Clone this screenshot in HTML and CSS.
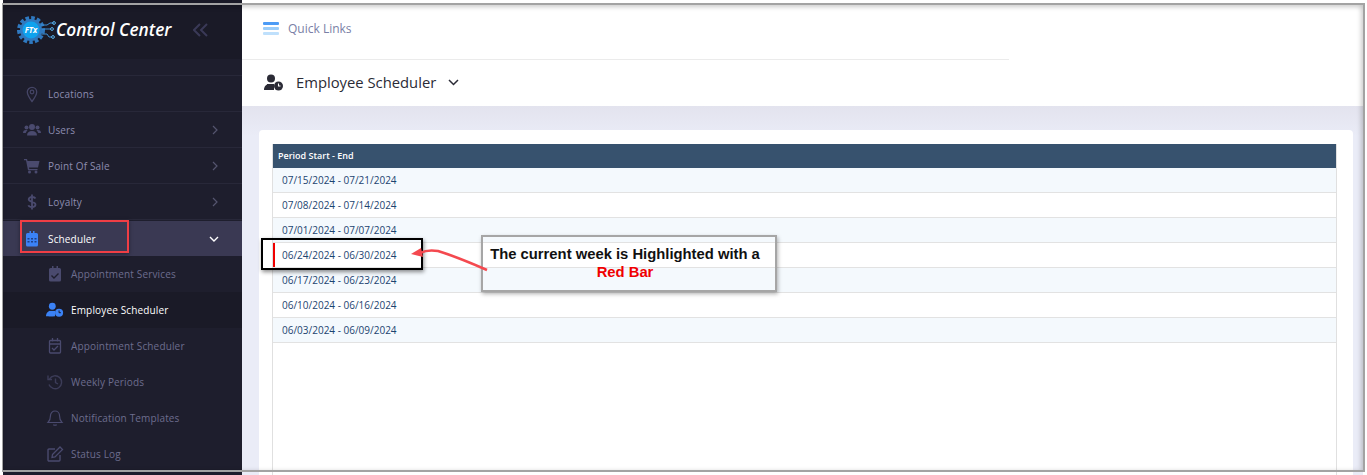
FILE: index.html
```html
<!DOCTYPE html>
<html lang="en">
  <head>
    <meta charset="UTF-8" />
    <meta name="viewport" content="width=device-width, initial-scale=1.0" />
    <title>Employee Scheduler</title>
    <link rel="stylesheet" href="styles.css">
  </head>
  <body>
    <div class="app">
      <aside class="sidebar">
        <div class="brand">
          <svg class="brand-logo" width="42" height="32" viewBox="0 0 42 32">
            <circle cx="16" cy="16" r="11.5" fill="none" stroke="#2f79c0" stroke-width="5" stroke-dasharray="3.4 2" />
            <circle cx="16" cy="16" r="11" fill="#2f79c0" />
            <circle cx="16" cy="16" r="8.5" fill="#0fa2ee" />
            <text x="16" y="19" class="brand-ftx" text-anchor="middle">FTx</text>
            <path d="M26 11h6l3-2h4M27 15h9M26 20h6l2 3h3" fill="none" stroke="#3d8fd6" stroke-width="1" />
            <circle cx="39" cy="9" r="1.4" fill="none" stroke="#59b0ea" />
            <circle cx="37" cy="15" r="1.4" fill="none" stroke="#59b0ea" />
            <circle cx="38" cy="23" r="1.4" fill="none" stroke="#59b0ea" />
          </svg>
          <span class="brand-name">Control Center</span>
          <svg class="brand-toggle" width="15" height="14" viewBox="0 0 15 14">
            <path d="M7 1L1 7l6 6M14 1L8 7l6 6" fill="none" stroke="#3a3957" stroke-width="2" />
          </svg>
        </div>
        <div class="sidebar-gap"></div>
        <nav class="menu">
          <a class="menu-item">
            <svg class="menu-icon" width="18" height="18" viewBox="0 0 18 18"><path d="M9 16.500C6 12.500 4.300 10 4.300 7a4.700 4.700 0 0 1 9.400 0c0 3-1.700 5.500-4.700 9.500z" fill="none" stroke="#454566" stroke-width="1.300" /><circle cx="9" cy="7" r="1.800" fill="none" stroke="#454566" stroke-width="1.200" /></svg>
            <span>Locations</span>
          </a>
          <a class="menu-item">
            <svg class="menu-icon" width="18" height="18" viewBox="0 0 18 18"><g fill="#4a4a6e"><circle cx="9" cy="6" r="3" /><circle cx="3.500" cy="6.500" r="2" /><circle cx="14.500" cy="6.500" r="2" /><path d="M4 14.500c0-3 2-4.500 5-4.500s5 1.500 5 4.500zM0 12c0-2 1-3 3-3 .6 0 1 .2 1.500.4C3.500 10 3 11 2.800 12zM18 12c0-2-1-3-3-3-.6 0-1 .2-1.500.4 1 .6 1.500 1.600 1.700 2.600z" /></g></svg>
            <span>Users</span>
            <svg class="menu-arrow" width="8" height="10" viewBox="0 0 8 10"><path d="M2 1l4 4-4 4" fill="none" stroke="#55556f" stroke-width="1.200" /></svg>
          </a>
          <a class="menu-item">
            <svg class="menu-icon" width="18" height="18" viewBox="0 0 18 18"><g fill="#4a4a6e"><path d="M1 2h3l.5 2H16.500l-1.500 6.500H6l.3 1.500H14.500v1.300H5L3 3.300H1z" /><circle cx="6.500" cy="15" r="1.500" /><circle cx="13" cy="15" r="1.500" /></g></svg>
            <span>Point Of Sale</span>
            <svg class="menu-arrow" width="8" height="10" viewBox="0 0 8 10"><path d="M2 1l4 4-4 4" fill="none" stroke="#55556f" stroke-width="1.200" /></svg>
          </a>
          <a class="menu-item">
            <svg class="menu-icon" width="18" height="18" viewBox="0 0 18 18"><path d="M12.500 5.500C12 4.500 11 4 9 4 7 4 5.700 5 5.700 6.300 5.700 9.500 12.500 8 12.500 11.500 12.500 13 11 14 9 14 7 14 5.800 13.300 5.400 12.200M9 1.500v15" fill="none" stroke="#4a4a6e" stroke-width="1.800" /></svg>
            <span>Loyalty</span>
            <svg class="menu-arrow" width="8" height="10" viewBox="0 0 8 10"><path d="M2 1l4 4-4 4" fill="none" stroke="#55556f" stroke-width="1.200" /></svg>
          </a>
          <a class="menu-item menu-item-open">
            <svg class="menu-icon" width="18" height="18" viewBox="0 0 18 18"><path d="M4.500 3H6.500V1H8v2h2V1h1.500v2h2A1.500 1.500 0 0 1 15 4.500V15a1.500 1.500 0 0 1-1.500 1.500h-9A1.500 1.500 0 0 1 3 15V4.500A1.500 1.500 0 0 1 4.500 3z" fill="#3b82f6" /><path d="M4.500 8h2v1.500h-2zM8 8h2v1.500H8zM11.500 8h2v1.500h-2zM4.500 11h2v1.500h-2zM8 11h2v1.500H8zM11.500 11h2v1.500h-2z" fill="#1f3f86" /></svg>
            <span>Scheduler</span>
            <svg class="menu-arrow" width="10" height="8" viewBox="0 0 10 8"><path d="M1 2l4 4 4-4" fill="none" stroke="#fff" stroke-width="1.400" /></svg>
          </a>
          <a class="menu-item sub-item">
            <svg class="menu-icon" width="18" height="18" viewBox="0 0 18 18"><path d="M4.500 3H6V1h1.500v2h3V1H12v2h1.500A1.500 1.500 0 0 1 15 4.500V15a1.500 1.500 0 0 1-1.500 1.500h-9A1.500 1.500 0 0 1 3 15V4.500A1.500 1.500 0 0 1 4.500 3z" fill="#4a4a6e" /><path d="M5.500 10.500l2.500 2.500 4.500-4.500" fill="none" stroke="#1e1e2d" stroke-width="1.400" /></svg>
            <span>Appointment Services</span>
          </a>
          <a class="menu-item sub-item sub-item-active">
            <svg class="menu-icon" width="20" height="18" viewBox="0 0 20 18"><g fill="#3b82f6"><circle cx="7" cy="4.800" r="3.800" /><path d="M0 16c0-4 2.500-6 6-6h2.500c-.6 1-1 2-1 3 0 1.200.4 2.300 1 3z" /><path d="M3 16h7v-6H3z" /><circle cx="14.500" cy="12" r="4.500" /></g><path d="M14.500 9.500V12h2" fill="none" stroke="#1a1a27" stroke-width="1.100" /></svg>
            <span>Employee Scheduler</span>
          </a>
          <a class="menu-item sub-item">
            <svg class="menu-icon" width="18" height="18" viewBox="0 0 18 18"><path d="M4.500 3.500h9a1 1 0 0 1 1 1V15a1 1 0 0 1-1 1h-9a1 1 0 0 1-1-1V4.500a1 1 0 0 1 1-1zM6.500 1v3.500M11.500 1v3.500M3.500 7h11" fill="none" stroke="#4a4a6e" stroke-width="1.300" /><path d="M6 11l2 2 4-4" fill="none" stroke="#4a4a6e" stroke-width="1.300" /></svg>
            <span>Appointment Scheduler</span>
          </a>
          <a class="menu-item sub-item">
            <svg class="menu-icon" width="18" height="18" viewBox="0 0 18 18"><path d="M3.500 6A6.500 6.500 0 1 1 3 11.500M2 2.500v4h4M9.500 5.500V9.500l2.500 1.500" fill="none" stroke="#3c3c58" stroke-width="1.400" /></svg>
            <span>Weekly Periods</span>
          </a>
          <a class="menu-item sub-item">
            <svg class="menu-icon" width="18" height="18" viewBox="0 0 18 18"><path d="M9 2a4.500 4.500 0 0 1 4.500 4.500c0 4 1 5.500 2.500 7H2c1.500-1.500 2.500-3 2.500-7A4.500 4.500 0 0 1 9 2zM7.500 15.500c.3 1 2.700 1 3 0" fill="none" stroke="#4a4a6e" stroke-width="1.200" /></svg>
            <span>Notification Templates</span>
          </a>
          <a class="menu-item sub-item">
            <svg class="menu-icon" width="18" height="18" viewBox="0 0 18 18"><path d="M14 10v5a1 1 0 0 1-1 1H3a1 1 0 0 1-1-1V5a1 1 0 0 1 1-1h6" fill="none" stroke="#4a4a6e" stroke-width="1.400" /><path d="M6.500 9.500L14 2l2.500 2.500L9 12l-3 .5z" fill="none" stroke="#4a4a6e" stroke-width="1.300" /></svg>
            <span>Status Log</span>
          </a>
        </nav>
      </aside>

      <main class="main">
        <header class="topbar">
          <div class="quick-links">
            <svg width="16" height="14" viewBox="0 0 16 14"><rect y="0" width="16" height="3" rx="1" fill="#4c9bf5" /><rect y="5" width="16" height="3" rx="1" fill="#9accf9" /><rect y="10" width="16" height="3" rx="1" fill="#bfe0fc" /></svg>
            <span>Quick Links</span>
          </div>
          <div class="page-title">
            <svg width="20" height="17" viewBox="0 0 20 17"><g fill="#2b2b36"><circle cx="7" cy="4.500" r="4" /><path d="M0 16c0-4 2.500-6 6-6h2.500c-.6 1-1 2-1 3 0 1.200.4 2.300 1 3z" /><path d="M3 16h7v-6H3z" /><circle cx="14.500" cy="12" r="4.500" /></g><path d="M14.500 9.500V12h2" fill="none" stroke="#fff" stroke-width="1.100" /></svg>
            <h1>Employee Scheduler</h1>
            <svg width="11" height="7" viewBox="0 0 11 7"><path d="M1 1l4.500 4.500L10 1" fill="none" stroke="#2b2b36" stroke-width="1.500" /></svg>
          </div>
        </header>
        <section class="content">
          <div class="card">
            <div class="period-table">
              <div class="period-head">Period Start - End</div>
              <div class="period-row">07/15/2024 - 07/21/2024</div>
              <div class="period-row">07/08/2024 - 07/14/2024</div>
              <div class="period-row">07/01/2024 - 07/07/2024</div>
              <div class="period-row period-current">06/24/2024 - 06/30/2024</div>
              <div class="period-row">06/17/2024 - 06/23/2024</div>
              <div class="period-row">06/10/2024 - 06/16/2024</div>
              <div class="period-row">06/03/2024 - 06/09/2024</div>
            </div>
          </div>
        </section>
      </main>
    </div>

    <!-- annotations drawn over the screenshot -->
    <div class="frame"></div>
    <div class="mark-scheduler"></div>
    <div class="mark-week"></div>
    <div class="callout">
      <div>The current week is Highlighted with a</div>
      <div class="callout-red">Red Bar</div>
    </div>
    <svg class="callout-arrow" width="80" height="30" viewBox="0 0 80 30">
      <path d="M76 25C60 18 40 10 27 6 21 5 15 5 9 8" fill="none" stroke="#f4494f" stroke-width="2.600" />
      <path d="M0 9l10-6 2 9z" fill="#f4494f" />
    </svg>
  </body>
</html>
```

FILE: styles.css
```css
html,
body {
  margin: 0;
  height: 475px;
  overflow: hidden;
}

body {
  position: relative;
  font-family: "Open Sans", sans-serif;
  background: #fff;
}

.app {
  display: flex;
  height: 475px;
  padding-left: 3px;
  padding-right: 4px;
}

.sidebar {
  width: 239px;
  flex: none;
  background: #1e1e2d;
}

.brand {
  height: 59px;
  display: flex;
  align-items: center;
  padding-left: 12px;
  background: #1a1a27;
  box-sizing: border-box;
}

.brand-logo {
  flex: none;
}

.brand-ftx {
  font: italic bold 8px "Open Sans", sans-serif;
  fill: #fff;
}

.brand-name {
  margin-left: -1px;
  font-size: 17.3px;
  font-weight: 600;
  font-style: italic;
  color: #fff;
  white-space: nowrap;
}

.brand-toggle {
  margin-left: 22px;
}

.sidebar-gap {
  height: 17px;
  border-bottom: 1px solid #282839;
  box-sizing: border-box;
}

.menu-item {
  height: 36px;
  display: flex;
  align-items: center;
  padding-left: 20px;
  padding-right: 23px;
  font-size: 10px;
  letter-spacing: 0.15px;
  color: #8d8db0;
  border-bottom: 1px solid #282839;
  box-sizing: border-box;
}

.menu-icon {
  flex: none;
  width: 18px;
  margin-right: 7px;
}

.menu-arrow {
  margin-left: auto;
}

.menu-item-open {
  height: 35px;
  margin-top: 1px;
  background: #3a3953;
  color: #fff;
  font-weight: 500;
  border-bottom: none;
}

.sub-item {
  padding-left: 43px;
  color: #6d6d8e;
  border-bottom: none;
}

.sub-item-active {
  background: #1a1a27;
  color: #fff;
  font-weight: 500;
}

.main {
  flex: 1;
  display: flex;
  flex-direction: column;
  min-width: 0;
}

.topbar {
  height: 106px;
  flex: none;
  background: #fff;
}

.quick-links {
  height: 60px;
  width: 767px;
  box-sizing: border-box;
  padding: 0 0 2px 21px;
  display: flex;
  align-items: center;
  gap: 9px;
  font-size: 12px;
  color: #7a7fa6;
  border-bottom: 1px solid #ebebeb;
}

.page-title {
  height: 46px;
  box-sizing: border-box;
  padding: 0 0 2px 22px;
  display: flex;
  align-items: center;
  gap: 12px;
  color: #2b2b36;
}

.page-title h1 {
  margin: 0;
  font-size: 14.8px;
  font-weight: 400;
}

.content {
  flex: 1;
  padding: 24px 10px 0 17px;
  background: linear-gradient(#e3e3ee, #eaecf7 30px);
}

.card {
  height: 100%;
  padding: 14px 16px 0 14px;
  background: #fff;
  border-radius: 4px 4px 0 0;
  box-sizing: border-box;
}

.period-table {
  height: 100%;
  margin-left: -1px;
  border-right: 1px solid #e0e0e0;
  border-left: 1px solid #e0e0e0;
}

.period-head {
  height: 24px;
  display: flex;
  align-items: center;
  padding: 0 0 2px 5px;
  box-sizing: border-box;
  font-size: 9px;
  font-weight: 600;
  color: #fff;
  background: #37526e;
}

.period-row {
  height: 25px;
  display: flex;
  align-items: center;
  padding-left: 9px;
  font-size: 10px;
  color: #1c4470;
  border-bottom: 1px solid #e2e2e2;
  box-sizing: border-box;
}

.period-row:nth-child(even) {
  background: #f4f9fd;
}

.period-current {
  box-shadow: inset 2px 0 0 #f00000;
}

.frame {
  position: absolute;
  left: 2px;
  top: 3px;
  width: 1360px;
  height: 465px;
  border: 2px solid #a3a3a3;
  border-left-width: 1px;
  box-shadow: inset 0 3px 4px rgba(0, 0, 0, 0.12), inset -3px 0 4px rgba(0, 0, 0, 0.12);
  pointer-events: none;
}

.mark-scheduler {
  position: absolute;
  left: 20px;
  top: 220px;
  width: 105px;
  height: 29px;
  border: 2px solid #ef3e45;
  box-shadow: 0 1px 4px rgba(0, 0, 0, 0.4);
}

.mark-week {
  position: absolute;
  left: 261px;
  top: 238px;
  width: 158px;
  height: 28px;
  border: 2px solid #000;
  box-shadow: 1px 2px 4px rgba(0, 0, 0, 0.45);
}

.callout {
  position: absolute;
  left: 481px;
  top: 235px;
  width: 284px;
  height: 45px;
  padding: 8px 8px 0 0;
  border: 2px solid #a6a6a6;
  box-shadow: 1px 2px 4px rgba(0, 0, 0, 0.3);
  font: bold 14.8px/18px "Liberation Sans", Arial, sans-serif;
  color: #111;
  text-align: center;
  white-space: nowrap;
}

.callout-red {
  color: #f00000;
}

.callout-arrow {
  position: absolute;
  left: 411px;
  top: 245px;
}
```
